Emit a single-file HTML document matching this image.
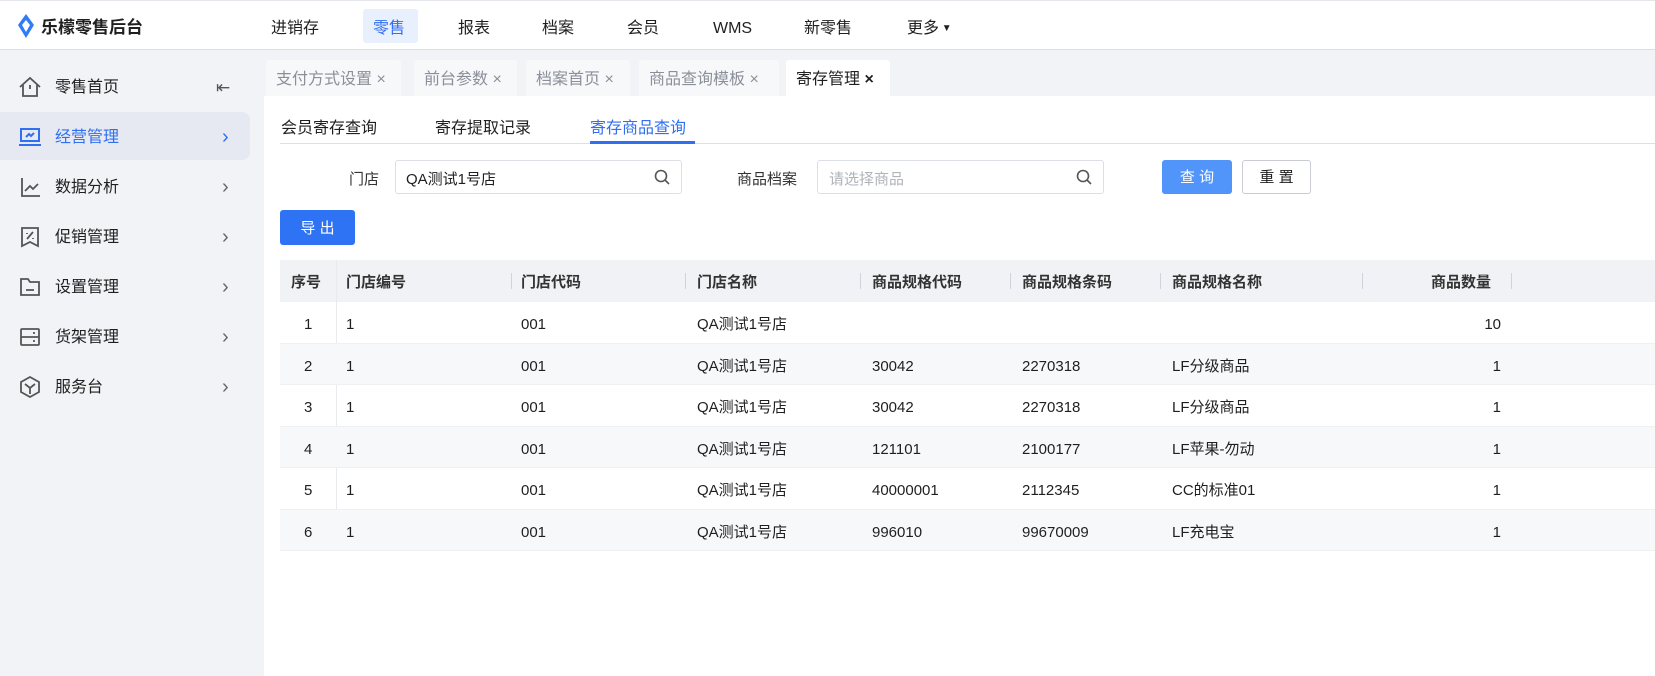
<!DOCTYPE html>
<html><head><meta charset="utf-8"><style>
*{margin:0;padding:0;box-sizing:border-box}
body{width:1655px;height:676px;overflow:hidden;background:#fff;font-family:"Liberation Sans","Noto Sans CJK SC",sans-serif;color:#1f1f1f;font-size:16px;position:relative;line-height:20px}
.a{position:absolute;white-space:nowrap;line-height:20px}
#hdr{position:absolute;left:0;top:0;width:1655px;height:50px;background:#fff;border-top:1px solid #e5e6eb;border-bottom:1px solid #dcdfe6}
#side{position:absolute;left:0;top:50px;width:264px;height:626px;background:#f2f3f6}
#tabs{position:absolute;left:264px;top:50px;width:1391px;height:46px;background:#f2f3f6}
.tab{position:absolute;top:10px;height:36px;background:#f7f8fa;color:#8a8f99;font-size:16px;line-height:40px;padding-left:10px;border-radius:3px 3px 0 0}
.tab.on{background:#fff;color:#1f1f1f}
.nav{top:18px;font-size:16px;color:#1f1f1f}
.si{font-size:16px;color:#1f1f1f;left:55px}
.chev{left:222px;color:#666;font-size:20px}
.th{top:273px;font-weight:bold;font-size:15px;color:#333}
.sep{position:absolute;top:273px;width:1px;height:16px;background:#d0d3d9}
.row{position:absolute;left:280px;width:1375px;height:41.5px;border-bottom:1px solid #eef0f3}
.row.g{background:#f7f8fa}
.c{position:absolute;top:13px;font-size:15px;color:#1f1f1f;white-space:nowrap;line-height:20px}
svg{position:absolute}
</style></head><body>
<div id="hdr">
<svg style="left:17px;top:13px" width="18" height="24" viewBox="0 0 18 24"><path d="M9 0 L17 11 L9 24 L1 11 Z" fill="#2f7cf6"/><path d="M9 6 L13 11 L9 18 L5 11Z" fill="#fff"/></svg>
<div class="a" style="left:41px;top:17px;font-weight:bold;font-size:17px">乐檬零售后台</div>
<div class="a" style="left:363px;top:8px;width:55px;height:34px;background:#e8effd;border-radius:3px"></div>
<div class="a nav" style="left:271px">进销存</div>
<div class="a nav" style="left:373px;color:#2f6ff0">零售</div>
<div class="a nav" style="left:458px">报表</div>
<div class="a nav" style="left:542px">档案</div>
<div class="a nav" style="left:627px">会员</div>
<div class="a nav" style="left:713px">WMS</div>
<div class="a nav" style="left:804px">新零售</div>
<div class="a nav" style="left:907px">更多<span style="font-size:10px;vertical-align:2px"> ▼</span></div>
</div>
<div id="side">
<div class="a" style="left:0;top:62px;width:250px;height:48px;background:#e6e9f2;border-radius:0 8px 8px 0"></div>
<svg style="left:18px;top:26px" width="24" height="22" viewBox="0 0 24 22" fill="none" stroke="#555" stroke-width="1.8"><path d="M2 11 L12 2 L22 11 M5 9 V20 H19 V9 M12 9 V13"/></svg>
<div class="a si" style="top:28px">零售首页</div>
<div class="a" style="left:216px;top:28px;color:#555;font-size:17px">⇤</div>
<svg style="left:18px;top:77px" width="24" height="20" viewBox="0 0 24 20" fill="none" stroke="#2f6ff0" stroke-width="2"><rect x="3" y="2" width="18" height="12"/><path d="M1 18 H23 M8 10 L11 7 L13 9 L16 6"/></svg>
<div class="a si" style="top:78px;color:#2f6ff0">经营管理</div>
<div class="a chev" style="top:77px;color:#2f6ff0">›</div>
<svg style="left:20px;top:126px" width="22" height="22" viewBox="0 0 22 22" fill="none" stroke="#555" stroke-width="1.8"><path d="M2 2 V20 H20 M5 15 L10 10 L13 13 L18 8"/></svg>
<div class="a si" style="top:128px">数据分析</div><div class="a chev" style="top:127px">›</div>
<svg style="left:20px;top:176px" width="20" height="22" viewBox="0 0 20 22" fill="none" stroke="#555" stroke-width="1.8"><path d="M2 2 H18 V20 L10 16 L2 20 Z M7 7 L7 8 M13 6 L7 13 M13 12 L13 13"/></svg>
<div class="a si" style="top:178px">促销管理</div><div class="a chev" style="top:177px">›</div>
<svg style="left:19px;top:227px" width="22" height="20" viewBox="0 0 22 20" fill="none" stroke="#555" stroke-width="1.8"><path d="M2 2 H9 L11 5 H20 V18 H2 Z M7 13 H15"/></svg>
<div class="a si" style="top:228px">设置管理</div><div class="a chev" style="top:227px">›</div>
<svg style="left:19px;top:277px" width="22" height="20" viewBox="0 0 22 20" fill="none" stroke="#555" stroke-width="1.8"><rect x="2" y="2" width="18" height="16" rx="1"/><path d="M2 10 H20 M14 6 H16 M14 14 H16"/></svg>
<div class="a si" style="top:278px">货架管理</div><div class="a chev" style="top:277px">›</div>
<svg style="left:19px;top:325px" width="22" height="24" viewBox="0 0 22 24" fill="none" stroke="#555" stroke-width="1.8"><path d="M11 2 L20 7 V17 L11 22 L2 17 V7 Z M6 9 L11 13 L16 9 M11 13 V19"/></svg>
<div class="a si" style="top:328px">服务台</div><div class="a chev" style="top:327px">›</div>
</div>
<div id="tabs">
<div class="tab" style="left:2px;width:135px">支付方式设置 ×</div>
<div class="tab" style="left:150px;width:103px">前台参数 ×</div>
<div class="tab" style="left:262px;width:104px">档案首页 ×</div>
<div class="tab" style="left:375px;width:140px">商品查询模板 ×</div>
<div class="tab on" style="left:522px;width:104px">寄存管理 <b>×</b></div>
</div>
<div class="a" style="left:281px;top:119px">会员寄存查询</div>
<div class="a" style="left:435px;top:119px">寄存提取记录</div>
<div class="a" style="left:590px;top:119px;color:#2f6ff0">寄存商品查询</div>
<div class="a" style="left:280px;top:143px;width:1375px;height:1px;background:#dcdfe6"></div>
<div class="a" style="left:590px;top:141px;width:105px;height:3px;background:#2f6ff0"></div>
<div class="a" style="left:349px;top:170px;font-size:15px;color:#333">门店</div>
<div class="a" style="left:395px;top:160px;width:287px;height:34px;border:1px solid #dcdfe6;border-radius:3px"></div>
<div class="a" style="left:406px;top:170px;font-size:15px">QA测试1号店</div>
<svg style="left:654px;top:169px" width="16" height="16" viewBox="0 0 16 16" fill="none" stroke="#555" stroke-width="1.6"><circle cx="7" cy="7" r="5.5"/><path d="M11 11 L15 15"/></svg>
<div class="a" style="left:737px;top:170px;font-size:15px;color:#333">商品档案</div>
<div class="a" style="left:817px;top:160px;width:287px;height:34px;border:1px solid #dcdfe6;border-radius:3px"></div>
<div class="a" style="left:829px;top:170px;font-size:15px;color:#b0b3ba">请选择商品</div>
<svg style="left:1076px;top:169px" width="16" height="16" viewBox="0 0 16 16" fill="none" stroke="#555" stroke-width="1.6"><circle cx="7" cy="7" r="5.5"/><path d="M11 11 L15 15"/></svg>
<div class="a" style="left:1162px;top:160px;width:70px;height:34px;background:#5195fb;border-radius:3px;color:#fff;font-size:15px;line-height:36px;text-align:center">查 询</div>
<div class="a" style="left:1242px;top:160px;width:69px;height:34px;border:1px solid #c9ccd3;border-radius:3px;font-size:15px;line-height:34px;text-align:center">重 置</div>
<div class="a" style="left:280px;top:210px;width:75px;height:35px;background:#2f73f5;border-radius:3px;color:#fff;font-size:15px;line-height:37px;text-align:center">导 出</div>
<div class="a" style="left:280px;top:260px;width:1375px;height:42px;background:#f1f2f5"></div>
<div class="a" style="left:336px;top:260px;width:1px;height:290px;background:#e8eaee"></div>
<div class="a th" style="left:291px">序号</div>
<div class="a th" style="left:346px">门店编号</div>
<div class="a th" style="left:521px">门店代码</div>
<div class="a th" style="left:697px">门店名称</div>
<div class="a th" style="left:872px">商品规格代码</div>
<div class="a th" style="left:1022px">商品规格条码</div>
<div class="a th" style="left:1172px">商品规格名称</div>
<div class="a th" style="left:1431px">商品数量</div>
<div class="sep" style="left:511px"></div><div class="sep" style="left:685px"></div><div class="sep" style="left:860px"></div><div class="sep" style="left:1010px"></div><div class="sep" style="left:1160px"></div><div class="sep" style="left:1362px"></div><div class="sep" style="left:1511px"></div>
<div class="row" style="top:302px"><div class="c" style="left:24px">1</div><div class="c" style="left:66px">1</div><div class="c" style="left:241px">001</div><div class="c" style="left:417px">QA测试1号店</div><div class="c" style="right:154px">10</div></div>
<div class="row g" style="top:343.5px"><div class="c" style="left:24px">2</div><div class="c" style="left:66px">1</div><div class="c" style="left:241px">001</div><div class="c" style="left:417px">QA测试1号店</div><div class="c" style="left:592px">30042</div><div class="c" style="left:742px">2270318</div><div class="c" style="left:892px">LF分级商品</div><div class="c" style="right:154px">1</div></div>
<div class="row" style="top:385px"><div class="c" style="left:24px">3</div><div class="c" style="left:66px">1</div><div class="c" style="left:241px">001</div><div class="c" style="left:417px">QA测试1号店</div><div class="c" style="left:592px">30042</div><div class="c" style="left:742px">2270318</div><div class="c" style="left:892px">LF分级商品</div><div class="c" style="right:154px">1</div></div>
<div class="row g" style="top:426.5px"><div class="c" style="left:24px">4</div><div class="c" style="left:66px">1</div><div class="c" style="left:241px">001</div><div class="c" style="left:417px">QA测试1号店</div><div class="c" style="left:592px">121101</div><div class="c" style="left:742px">2100177</div><div class="c" style="left:892px">LF苹果-勿动</div><div class="c" style="right:154px">1</div></div>
<div class="row" style="top:468px"><div class="c" style="left:24px">5</div><div class="c" style="left:66px">1</div><div class="c" style="left:241px">001</div><div class="c" style="left:417px">QA测试1号店</div><div class="c" style="left:592px">40000001</div><div class="c" style="left:742px">2112345</div><div class="c" style="left:892px">CC的标准01</div><div class="c" style="right:154px">1</div></div>
<div class="row g" style="top:509.5px"><div class="c" style="left:24px">6</div><div class="c" style="left:66px">1</div><div class="c" style="left:241px">001</div><div class="c" style="left:417px">QA测试1号店</div><div class="c" style="left:592px">996010</div><div class="c" style="left:742px">99670009</div><div class="c" style="left:892px">LF充电宝</div><div class="c" style="right:154px">1</div></div>
</body></html>
